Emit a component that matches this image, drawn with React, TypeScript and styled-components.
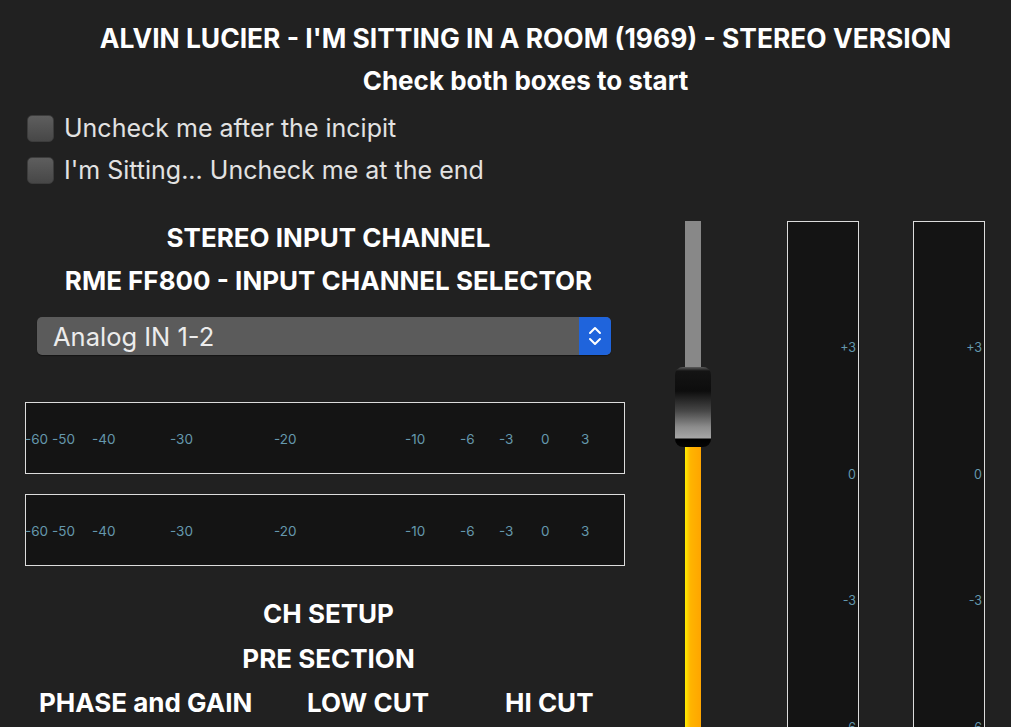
import React from 'react';
import styled, { createGlobalStyle } from 'styled-components';

const GlobalStyle = createGlobalStyle`
  html, body {
    margin: 0;
    padding: 0;
    background: #212121;
    overflow: hidden;
  }
  body {
    font-family: Inter, "Liberation Sans", sans-serif;
    color: #ffffff;
  }
`;

const Page = styled.div`
  width: 1011px;
  height: 727px;
  overflow: hidden;
  background: #212121;
  box-sizing: border-box;
`;

const Header = styled.header`
  padding: 22px 0 0 40px;
  text-align: center;
`;

const Title = styled.h1`
  margin: 0;
  font-size: 26.4px;
  font-weight: 700;
  line-height: 32px;
  color: #ffffff;
  white-space: nowrap;
`;

const Subtitle = styled.h2`
  margin: 11px 0 0;
  font-size: 26px;
  font-weight: 700;
  line-height: 32px;
  color: #ffffff;
`;

const CheckList = styled.div`
  display: flex;
  flex-direction: column;
  gap: 12px;
  padding: 16px 0 0 27px;
`;

const CheckRow = styled.label`
  display: flex;
  align-items: center;
  gap: 10px;
  height: 30px;
  font-size: 25px;
  color: #e2e2e2;
`;

const CheckBox = styled.span`
  width: 27px;
  height: 27px;
  box-sizing: border-box;
  border-radius: 5px;
  background: linear-gradient(to bottom, #5e5e5e, #474747);
  border: 1px solid #3c3c3c;
  flex-shrink: 0;
`;

const Main = styled.div`
  display: flex;
  align-items: flex-start;
  padding-top: 36px;
`;

const LeftColumn = styled.section`
  width: 600px;
  margin-left: 25px;
  padding-top: 1px;
  display: flex;
  flex-direction: column;
`;

const SectionTitle = styled.div<{ $top?: number }>`
  margin-top: ${p => p.$top ?? 0}px;
  padding-left: 7px;
  text-align: center;
  font-size: 26px;
  font-weight: 700;
  line-height: 32px;
  color: #ffffff;
  white-space: nowrap;
`;

const SelectBox = styled.div`
  margin: 20px 14px 0 12px;
  height: 38px;
  display: flex;
  align-items: stretch;
  border-radius: 5px;
  background: #5b5b5b;
  overflow: hidden;
  box-shadow: 0 1px 1px rgba(0, 0, 0, 0.4);
`;

const SelectValue = styled.div`
  flex: 1;
  display: flex;
  align-items: center;
  padding-left: 16px;
  font-size: 25.5px;
  color: #ececec;
`;

const SelectArrow = styled.div`
  width: 32px;
  display: flex;
  align-items: center;
  justify-content: center;
  background: #1f64dc;
`;

const HMeter = styled.div<{ $top: number }>`
  position: relative;
  margin-top: ${p => p.$top}px;
  height: 72px;
  box-sizing: border-box;
  border: 1px solid #dcdcdc;
  background: #141414;
`;

const HMark = styled.span.attrs<{ $x: number }>(p => ({
  style: { left: `${p.$x}px` },
}))<{ $x: number }>`
  position: absolute;
  top: 28px;
  font-size: 13.5px;
  line-height: 16px;
  color: #6598ad;
  white-space: nowrap;
`;

const SectionRow = styled.div`
  margin-top: 12px;
  display: grid;
  grid-template-columns: 268px 198px auto;
  padding-left: 14px;
  font-size: 26px;
  font-weight: 700;
  line-height: 32px;
  white-space: nowrap;
`;

const RightColumn = styled.section`
  margin-left: 50px;
  display: flex;
  align-items: flex-start;
`;

const Fader = styled.div`
  width: 36px;
  display: flex;
  flex-direction: column;
  align-items: center;
`;

const FaderTrack = styled.div`
  width: 16px;
  height: 146px;
  background: #888888;
`;

const FaderThumb = styled.div`
  width: 36px;
  height: 80px;
  border-radius: 8px;
  background: linear-gradient(
    to bottom,
    #5c5c5c 0px,
    #141414 4px,
    #0d0d0d 24px,
    #474747 44px,
    #8c8c8c 60px,
    #a6a6a6 71px,
    #000000 72px,
    #050505 80px
  );
`;

const FaderFill = styled.div`
  width: 16px;
  height: 300px;
  background: linear-gradient(to right, #ffee00 0%, #ffb400 35%, #ffa500 100%);
`;

const VMeter = styled.div<{ $gap: number }>`
  position: relative;
  margin-left: ${p => p.$gap}px;
  width: 72px;
  height: 600px;
  box-sizing: border-box;
  border: 1px solid #dcdcdc;
  background: #141414;
`;

const VMark = styled.span.attrs<{ $y: number }>(p => ({
  style: { top: `${p.$y}px` },
}))<{ $y: number }>`
  position: absolute;
  right: 2px;
  font-size: 12.5px;
  line-height: 16px;
  color: #6598ad;
  transform: translateY(-50%);
`;

const hMarks: [string, number][] = [
  ['-60', -1],
  ['-50', 26],
  ['-40', 66],
  ['-30', 144],
  ['-20', 248],
  ['-10', 379],
  ['-6', 434],
  ['-3', 473],
  ['0', 515],
  ['3', 555],
];

const vMarks = ['+3', '0', '-3', '-6'];
// 3 dB ≈ 126.5px on the vertical meters, +3 sits 126px below the top
const dbToY = (i: number) => 126 + i * 126.5;

const UpDown = () => (
  <svg width="16" height="26" viewBox="0 0 16 26" fill="none">
    <path d="M3 10 L8 5 L13 10" stroke="#ffffff" strokeWidth="2" strokeLinecap="round" strokeLinejoin="round" />
    <path d="M3 16 L8 21 L13 16" stroke="#ffffff" strokeWidth="2" strokeLinecap="round" strokeLinejoin="round" />
  </svg>
);

const LevelMeter: React.FC<{ top: number }> = ({ top }) => (
  <HMeter $top={top}>
    {hMarks.map(([label, x]) => (
      <HMark key={label} $x={x}>{label}</HMark>
    ))}
  </HMeter>
);

const VerticalMeter: React.FC<{ gap: number }> = ({ gap }) => (
  <VMeter $gap={gap}>
    {vMarks.map((label, i) => (
      <VMark key={label} $y={dbToY(i)}>{label}</VMark>
    ))}
  </VMeter>
);

export default function App() {
  return (
    <Page>
      <GlobalStyle />
      <Header>
        <Title>ALVIN LUCIER - I'M SITTING IN A ROOM (1969) - STEREO VERSION</Title>
        <Subtitle>Check both boxes to start</Subtitle>
      </Header>
      <CheckList>
        <CheckRow><CheckBox />Uncheck me after the incipit</CheckRow>
        <CheckRow><CheckBox />I'm Sitting... Uncheck me at the end</CheckRow>
      </CheckList>
      <Main>
        <LeftColumn>
          <SectionTitle>STEREO INPUT CHANNEL</SectionTitle>
          <SectionTitle $top={11}>RME FF800 - INPUT CHANNEL SELECTOR</SectionTitle>
          <SelectBox>
            <SelectValue>Analog IN 1-2</SelectValue>
            <SelectArrow><UpDown /></SelectArrow>
          </SelectBox>
          <LevelMeter top={47} />
          <LevelMeter top={20} />
          <SectionTitle $top={32}>CH SETUP</SectionTitle>
          <SectionTitle $top={13}>PRE SECTION</SectionTitle>
          <SectionRow>
            <span>PHASE and GAIN</span>
            <span>LOW CUT</span>
            <span>HI CUT</span>
          </SectionRow>
        </LeftColumn>
        <RightColumn>
          <Fader>
            <FaderTrack />
            <FaderThumb />
            <FaderFill />
          </Fader>
          <VerticalMeter gap={76} />
          <VerticalMeter gap={54} />
        </RightColumn>
      </Main>
    </Page>
  );
}
